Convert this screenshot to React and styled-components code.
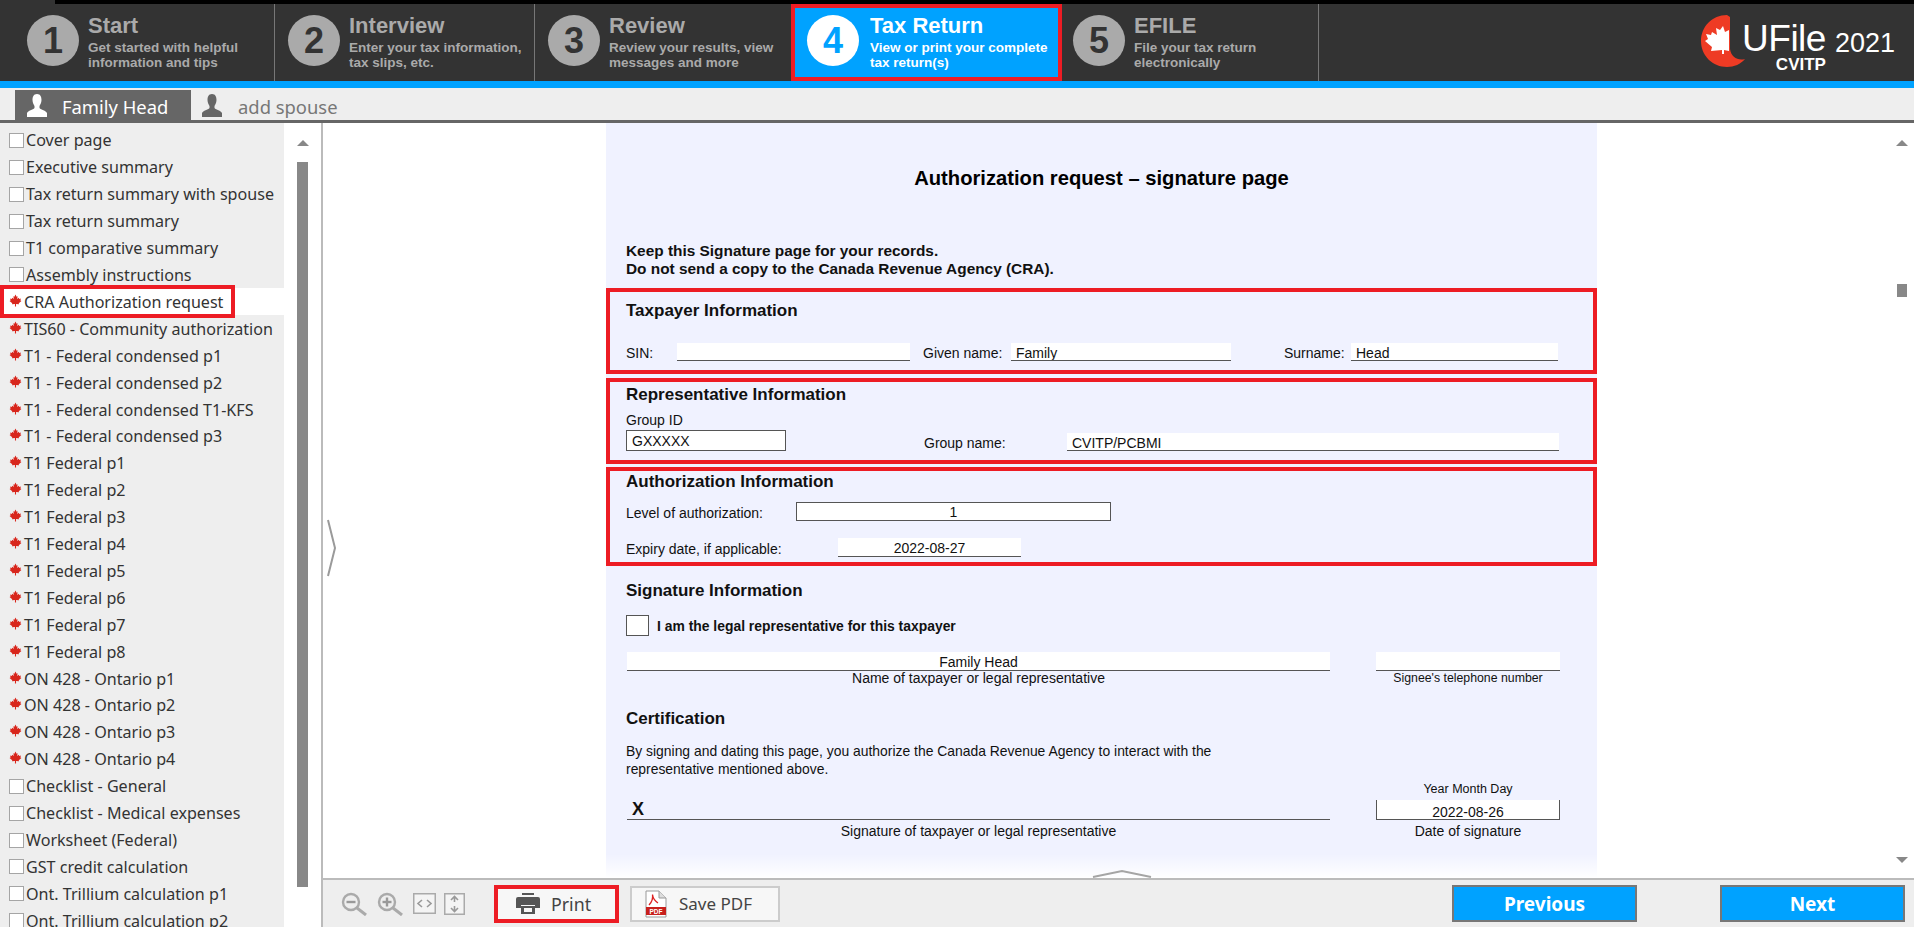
import styled, { createGlobalStyle } from "styled-components";

const GlobalStyle = createGlobalStyle`
  html, body { margin: 0; padding: 0; background: #fff; }
  * { box-sizing: border-box; }
`;

const LEAF =
  "M12 1 L14 5 L16 4 L15 9 L18 7 L19 9 L22 8.5 L21 12 L23 13 L18 17 L18.5 19 L13 18.3 L13 23 L11 23 L11 18.3 L5.5 19 L6 17 L1 13 L3 12 L2 8.5 L5 9 L6 7 L9 9 L8 4 L10 5 Z";

const steps = [
  { n: 1, title: "Start", text: ["Get started with helpful", "information and tips"], w: 275 },
  { n: 2, title: "Interview", text: ["Enter your tax information,", "tax slips, etc."], w: 260 },
  { n: 3, title: "Review", text: ["Review your results, view", "messages and more"], w: 256 },
  { n: 4, title: "Tax Return", text: ["View or print your complete", "tax return(s)"], w: 271, active: true },
  { n: 5, title: "EFILE", text: ["File your tax return", "electronically"], w: 257 },
];

const forms = [
  ["Cover page"],
  ["Executive summary"],
  ["Tax return summary with spouse"],
  ["Tax return summary"],
  ["T1 comparative summary"],
  ["Assembly instructions"],
  ["CRA Authorization request", "leaf", true],
  ["TIS60 - Community authorization", "leaf"],
  ["T1 - Federal condensed p1", "leaf"],
  ["T1 - Federal condensed p2", "leaf"],
  ["T1 - Federal condensed T1-KFS", "leaf"],
  ["T1 - Federal condensed p3", "leaf"],
  ["T1 Federal p1", "leaf"],
  ["T1 Federal p2", "leaf"],
  ["T1 Federal p3", "leaf"],
  ["T1 Federal p4", "leaf"],
  ["T1 Federal p5", "leaf"],
  ["T1 Federal p6", "leaf"],
  ["T1 Federal p7", "leaf"],
  ["T1 Federal p8", "leaf"],
  ["ON 428 - Ontario p1", "leaf"],
  ["ON 428 - Ontario p2", "leaf"],
  ["ON 428 - Ontario p3", "leaf"],
  ["ON 428 - Ontario p4", "leaf"],
  ["Checklist - General"],
  ["Checklist - Medical expenses"],
  ["Worksheet (Federal)"],
  ["GST credit calculation"],
  ["Ont. Trillium calculation p1"],
  ["Ont. Trillium calculation p2"],
];

const Person = ({ color, size = 24 }) => (
  <svg width={size} height={size} viewBox="0 0 24 24">
    <path
      fill={color}
      d="M12 1 C8.5 1 7.5 4 7.5 7 C7.5 10 9 12 9.5 13 L9.5 15 C8 17 3 17.5 2 20 L2 24 L22 24 L22 20 C21 17.5 16 17 14.5 15 L14.5 13 C15 12 16.5 10 16.5 7 C16.5 4 15.5 1 12 1 Z"
    />
  </svg>
);

const Leaf = ({ size = 13, color = "#d8261c" }) => (
  <svg width={size} height={size} viewBox="0 0 24 24">
    <path fill={color} d={LEAF} />
  </svg>
);

const Magnifier = ({ plus }) => (
  <svg width="28" height="24" viewBox="0 0 28 24" fill="none" stroke="#aaa">
    <circle cx="10" cy="10" r="8" strokeWidth="2.4" />
    <path d="M16 16 L25 23" strokeWidth="3" />
    <path d="M5.5 10 H14.5" strokeWidth="2.4" stroke="#999" />
    {plus && <path d="M10 5.5 V14.5" strokeWidth="2.4" stroke="#999" />}
  </svg>
);

const FitWidth = () => (
  <svg width="23" height="21" viewBox="0 0 23 21" fill="none">
    <rect x="0.75" y="0.75" width="21.5" height="19.5" fill="#f4f4f4" stroke="#aaa" strokeWidth="1.5" />
    <path d="M9 7 L5 10.5 L9 14 M14 7 L18 10.5 L14 14" stroke="#999" strokeWidth="1.6" />
  </svg>
);

const FitHeight = () => (
  <svg width="21" height="22" viewBox="0 0 21 22" fill="none">
    <rect x="0.75" y="0.75" width="19.5" height="20.5" fill="#f4f4f4" stroke="#aaa" strokeWidth="1.5" />
    <path d="M7 7 L10.5 3.5 L14 7 M10.5 4 V9 M7 15 L10.5 18.5 L14 15 M10.5 18 V13" stroke="#999" strokeWidth="1.6" />
  </svg>
);

const PrinterIcon = () => (
  <svg width="24" height="21" viewBox="0 0 24 21">
    <path fill="#555" d="M6 0 H18 V2 H6 Z M2 4 H22 Q24 4 24 6 V15 H19 V12 H5 V15 H0 V6 Q0 4 2 4 Z" />
    <path fill="#555" d="M5 13 H19 V21 H5 Z M8 15 V19 H16 V15 Z" fillRule="evenodd" />
  </svg>
);

const PdfIcon = () => (
  <svg width="22" height="28" viewBox="0 0 22 28">
    <path fill="#fff" stroke="#999" d="M1 1 H14 L21 8 V27 H1 Z" />
    <path fill="#ddd" stroke="#999" d="M14 1 V8 H21" />
    <path fill="none" stroke="#d22" strokeWidth="1.3" d="M4 15 C7 12 8 8 7.5 4.5 C8 9 10 11 13 13" />
    <rect x="1" y="17" width="20" height="8" fill="#c8201c" />
    <text x="11" y="23.5" textAnchor="middle" fontSize="6.5" fontWeight="700" fill="#fff" fontFamily="Liberation Sans, sans-serif">
      PDF
    </text>
  </svg>
);

const App = () => {
  return (
    <>
      <GlobalStyle />
      <Screen>
        <TopStrip />
        <Header>
          {steps.map((s) => (
            <Step key={s.n} $w={s.w} $active={s.active}>
              <StepNumber $active={s.active}>{s.n}</StepNumber>
              <StepText>
                <StepTitle $active={s.active}>{s.title}</StepTitle>
                {s.text.map((line) => (
                  <StepLine key={line} $active={s.active}>
                    {line}
                  </StepLine>
                ))}
              </StepText>
            </Step>
          ))}
          <Logo>
            <LogoMark viewBox="0 0 46 52" width="46" height="52">
              <path fill="#ee3b24" d="M26 0 C11 0 0 12 0 26 C0 41 12 52 26 52 C33 52 40 49 44 44 C37 46 30 42 29 34 L29 2 Z" />
              <path fill="#fff" d="M22 11 L24 17 L28 15 L28 36 L23 35 L23 39 L21 39 L21 35 L10 36 L11 32 L4 26 L7 24 L5 19 L10 20 L11 17 L16 20 L15 13 L19 15 Z" />
            </LogoMark>
            <LogoWords>
              <LogoBrand>UFile</LogoBrand>
              <LogoSub>CVITP</LogoSub>
            </LogoWords>
            <LogoYear>2021</LogoYear>
          </Logo>
        </Header>
        <BlueStrip />
        <TabBar>
          <Tab $active>
            <Person color="#fff" />
            Family Head
          </Tab>
          <Tab>
            <Person color="#666" />
            add spouse
          </Tab>
        </TabBar>

        <Body>
          <Sidebar>
            <FormList>
              {forms.map(([name, icon, selected]) => (
                <FormRow key={name} $selected={selected}>
                  {icon ? (
                    <LeafBox>
                      <Leaf />
                    </LeafBox>
                  ) : (
                    <CheckBox />
                  )}
                  {name}
                </FormRow>
              ))}
            </FormList>
            <ListScroll>
              <ArrowUp />
              <ScrollThumb />
            </ListScroll>
          </Sidebar>

          <Main>
            <Viewer>
              <LeftGutter>
                <svg width="12" height="58" viewBox="0 0 12 58" fill="none">
                  <path d="M2 1 L9 29 L2 57" stroke="#9a9a9a" strokeWidth="2" />
                </svg>
              </LeftGutter>

              <Page>
                <PageTitle>Authorization request – signature page</PageTitle>
                <Intro>
                  Keep this Signature page for your records.
                  <br />
                  Do not send a copy to the Canada Revenue Agency (CRA).
                </Intro>

                <Section $h={86} $mt={10}>
                  <SectionHead $mt={5}>Taxpayer Information</SectionHead>
                  <FieldRow $mt={22}>
                    <Label $w={51}>SIN:</Label>
                    <Field $w={233} />
                    <Label $w={88} $ml={13}>Given name:</Label>
                    <Field $w={220}>Family</Field>
                    <Label $w={67} $ml={53}>Surname:</Label>
                    <Field $w={207}>Head</Field>
                  </FieldRow>
                </Section>

                <Section $h={86} $mt={4}>
                  <SectionHead $mt={-1}>Representative Information</SectionHead>
                  <Label $mt={8}>Group ID</Label>
                  <FieldRow $mt={2}>
                    <BoxField $w={160} $h={21}>GXXXXX</BoxField>
                    <Label $w={143} $ml={138}>Group name:</Label>
                    <Field $w={492}>CVITP/PCBMI</Field>
                  </FieldRow>
                </Section>

                <Section $h={99} $mt={3}>
                  <SectionHead $mt={-3}>Authorization Information</SectionHead>
                  <FieldRow $mt={10}>
                    <Label $w={170}>Level of authorization:</Label>
                    <BoxField $w={315} $h={19} $center>1</BoxField>
                  </FieldRow>
                  <FieldRow $mt={17}>
                    <Label $w={212}>Expiry date, if applicable:</Label>
                    <Field $w={183} $h={19} $center>2022-08-27</Field>
                  </FieldRow>
                </Section>

                <Lower>
                  <SectionHead $mt={15}>Signature Information</SectionHead>
                  <CheckRow>
                    <BigCheck />
                    I am the legal representative for this taxpayer
                  </CheckRow>
                  <SignGrid $mt={16}>
                    <div>
                      <Field $h={19} $center>Family Head</Field>
                      <Caption>Name of taxpayer or legal representative</Caption>
                    </div>
                    <div>
                      <Field $h={19} />
                      <Caption $small>Signee's telephone number</Caption>
                    </div>
                  </SignGrid>
                  <SectionHead $mt={23}>Certification</SectionHead>
                  <Paragraph>
                    By signing and dating this page, you authorize the Canada Revenue Agency to interact with the
                    <br />
                    representative mentioned above.
                  </Paragraph>
                  <SignGrid $mt={4} $end>
                    <div>
                      <SignLine>X</SignLine>
                      <Caption>Signature of taxpayer or legal representative</Caption>
                    </div>
                    <div>
                      <YearLabel>Year Month Day</YearLabel>
                      <DateBox>2022-08-26</DateBox>
                      <Caption>Date of signature</Caption>
                    </div>
                  </SignGrid>
                </Lower>

                <PageFade>
                  <svg width="60" height="10" viewBox="0 0 60 10" fill="none">
                    <path d="M1 9 L30 3 L59 9" stroke="#a5a5a5" strokeWidth="2" />
                  </svg>
                </PageFade>
              </Page>

              <RightGutter>
                <ArrowUp />
                <ViewerThumb />
                <ArrowDown />
              </RightGutter>
            </Viewer>

            <BottomBar>
              <ZoomTools>
                <Magnifier />
                <Magnifier plus />
                <FitWidth />
                <FitHeight />
              </ZoomTools>
              <PrintButton>
                <PrinterIcon />
                Print
              </PrintButton>
              <SaveButton>
                <PdfIcon />
                Save PDF
              </SaveButton>
              <NavButton $ml={672}>Previous</NavButton>
              <NavButton $ml={83}>Next</NavButton>
            </BottomBar>
          </Main>
        </Body>
      </Screen>
    </>
  );
};

export default App;

const Screen = styled.div`
  width: 1914px;
  height: 927px;
  overflow: hidden;
  display: flex;
  flex-direction: column;
  background: #eee;
`;

const TopStrip = styled.div`
  height: 4px;
  flex: none;
  background: linear-gradient(to right, #333 55px, #000 55px);
`;

const Header = styled.header`
  height: 77px;
  flex: none;
  display: flex;
  background: #333;
`;

const Step = styled.div`
  width: ${({ $w }) => $w}px;
  flex: none;
  display: flex;
  padding-top: 11px;
  padding-left: ${({ $active }) => ($active ? "16px" : "27px")};
  gap: ${({ $active }) => ($active ? "11px" : "9px")};
  background: ${({ $active }) => ($active ? "#00a2ff" : "transparent")};
  border-right: ${({ $active }) => ($active ? "none" : "1px solid #777")};
  outline: ${({ $active }) => ($active ? "4px solid #ed1c24" : "none")};
  outline-offset: -4px;

  &:nth-child(3) {
    border-right: none;
  }
  &:nth-child(5) {
    padding-left: 11px;
  }
  &:nth-child(2) {
    padding-left: 13px;
  }
  &:nth-child(3) {
    padding-left: 13px;
  }
`;

const StepNumber = styled.div`
  width: 52px;
  height: 51px;
  flex: none;
  border-radius: 50%;
  display: flex;
  align-items: center;
  justify-content: center;
  background: ${({ $active }) => ($active ? "#fff" : "#aaa")};
  color: ${({ $active }) => ($active ? "#00a2ff" : "#333")};
  font: 700 36px "Liberation Sans", Arial, sans-serif;
`;

const StepText = styled.div`
  font-family: "Liberation Sans", Arial, sans-serif;
`;

const StepTitle = styled.div`
  font-size: 22px;
  font-weight: 700;
  line-height: 21px;
  height: 25px;
  color: ${({ $active }) => ($active ? "#fff" : "#aaa")};
`;

const StepLine = styled.div`
  font-size: 13.5px;
  font-weight: 700;
  line-height: 15px;
  white-space: nowrap;
  color: ${({ $active }) => ($active ? "#fff" : "#aaa")};
`;

const Logo = styled.div`
  flex: 1;
  display: flex;
  justify-content: flex-end;
  align-items: flex-start;
  padding: 11px 19px 0 0;
  color: #fff;
  font-family: "Liberation Sans", Arial, sans-serif;
`;

const LogoMark = styled.svg`
  flex: none;
  margin-right: -5px;
`;

const LogoWords = styled.div`
  display: flex;
  flex-direction: column;
  align-items: flex-end;
`;

const LogoBrand = styled.div`
  font-size: 37px;
  line-height: 38px;
  letter-spacing: -0.5px;
  margin-top: 5px;
`;

const LogoSub = styled.div`
  font-size: 17px;
  font-weight: 700;
  line-height: 16px;
  margin-top: -1px;
`;

const LogoYear = styled.div`
  font-size: 27px;
  line-height: 30px;
  margin: 13px 0 0 9px;
`;

const BlueStrip = styled.div`
  height: 7px;
  flex: none;
  background: #00a2ff;
`;

const TabBar = styled.div`
  height: 35px;
  flex: none;
  display: flex;
  align-items: flex-end;
  padding-left: 15px;
  background: #eee;
  border-bottom: 3px solid #666;
`;

const Tab = styled.div`
  height: 30px;
  width: ${({ $active }) => ($active ? "176px" : "auto")};
  display: flex;
  align-items: center;
  gap: ${({ $active }) => ($active ? "13px" : "14px")};
  padding-left: ${({ $active }) => ($active ? "10px" : "9px")};
  padding-top: 3px;
  background: ${({ $active }) => ($active ? "#666" : "transparent")};
  color: ${({ $active }) => ($active ? "#fff" : "#777")};
  font: 400 18.4px "Noto Sans", sans-serif;

  svg {
    margin-top: -3px;
  }
`;

const Body = styled.div`
  flex: 1;
  min-height: 0;
  display: flex;
`;

const Sidebar = styled.aside`
  width: 323px;
  flex: none;
  display: flex;
  background: #fff;
  border-right: 2px solid #bbb;
`;

const FormList = styled.div`
  width: 284px;
  flex: none;
  padding-top: 4px;
  background: #eee;
`;

const FormRow = styled.div`
  position: relative;
  height: 26.92px;
  display: flex;
  align-items: center;
  padding-left: 9px;
  white-space: nowrap;
  color: #333;
  font: 400 16.1px "Noto Sans", sans-serif;
  background: ${({ $selected }) => ($selected ? "#fff" : "transparent")};

  ${({ $selected }) =>
    $selected &&
    `
    &::after {
      content: "";
      box-sizing: border-box;
      position: absolute;
      left: 0;
      top: -3px;
      width: 235px;
      height: 33px;
      border: 4px solid #ed1c24;
    }
  `}
`;

const CheckBox = styled.span`
  width: 15px;
  height: 15px;
  flex: none;
  margin-right: 2px;
  background: #fff;
  border: 1.5px solid #a5a5a5;
`;

const LeafBox = styled.span`
  width: 15px;
  height: 13px;
  flex: none;
  display: flex;
  margin-bottom: 3px;
`;

const ListScroll = styled.div`
  flex: 1;
  display: flex;
  flex-direction: column;
  padding: 17px 0 0 13px;
`;

const ArrowUp = styled.div`
  width: 0;
  height: 0;
  border-left: 6px solid transparent;
  border-right: 6px solid transparent;
  border-bottom: 6px solid #888;
`;

const ArrowDown = styled(ArrowUp)`
  border-bottom: none;
  border-top: 6px solid #888;
`;

const ScrollThumb = styled.div`
  width: 11px;
  height: 725px;
  margin-top: 16px;
  background: #888;
`;

const Main = styled.main`
  flex: 1;
  min-width: 0;
  display: flex;
  flex-direction: column;
`;

const Viewer = styled.div`
  height: 755px;
  flex: none;
  display: flex;
  background: #fff;
`;

const LeftGutter = styled.div`
  width: 283px;
  flex: none;
  padding: 396px 0 0 3px;
`;

const Page = styled.div`
  position: relative;
  width: 991px;
  flex: none;
  overflow: hidden;
  padding-top: 43px;
  background: #f0f2ff;
  color: #111;
  font-family: "Liberation Sans", Arial, sans-serif;
`;

const PageTitle = styled.h1`
  margin: 0;
  height: 24px;
  text-align: center;
  font-size: 20.2px;
  line-height: 24px;
  font-weight: 700;
  color: #000;
`;

const Intro = styled.div`
  margin: 52px 0 0 20px;
  font-size: 15.4px;
  font-weight: 700;
  line-height: 18px;
`;

const Section = styled.section`
  height: ${({ $h }) => $h}px;
  margin-top: ${({ $mt }) => $mt}px;
  padding: 4px 0 0 16px;
  border: 4px solid #ed1c24;
`;

const SectionHead = styled.h2`
  margin: ${({ $mt }) => $mt || 0}px 0 0;
  height: 20px;
  font-size: 17px;
  line-height: 20px;
  font-weight: 700;
  color: #111;
`;

const FieldRow = styled.div`
  display: flex;
  align-items: flex-end;
  margin-top: ${({ $mt }) => $mt || 0}px;
`;

const Label = styled.div`
  width: ${({ $w }) => ($w ? `${$w}px` : "auto")};
  flex: none;
  margin-left: ${({ $ml }) => $ml || 0}px;
  margin-top: ${({ $mt }) => $mt || 0}px;
  font-size: 14px;
  line-height: 15px;
  white-space: nowrap;
`;

const Field = styled.div`
  width: ${({ $w }) => ($w ? `${$w}px` : "100%")};
  height: ${({ $h }) => $h || 18}px;
  flex: none;
  padding-left: ${({ $center }) => ($center ? "0" : "5px")};
  background: #fff;
  border-bottom: 1px solid #555;
  font-size: 14px;
  line-height: 21px;
  overflow: hidden;
  text-align: ${({ $center }) => ($center ? "center" : "left")};
`;

const BoxField = styled.div`
  width: ${({ $w }) => $w}px;
  height: ${({ $h }) => $h}px;
  flex: none;
  padding-left: ${({ $center }) => ($center ? "0" : "5px")};
  background: #fff;
  border: 1px solid #555;
  font-size: 14px;
  line-height: ${({ $h }) => $h}px;
  text-align: ${({ $center }) => ($center ? "center" : "left")};
`;

const Lower = styled.div`
  padding-left: 20px;
  padding-right: 37px;
`;

const CheckRow = styled.div`
  display: flex;
  align-items: center;
  gap: 8px;
  margin-top: 14px;
  font-size: 13.9px;
  font-weight: 700;
`;

const BigCheck = styled.span`
  width: 23px;
  height: 21px;
  background: #fff;
  border: 1px solid #555;
`;

const SignGrid = styled.div`
  display: grid;
  grid-template-columns: 703px 184px;
  column-gap: 46px;
  align-items: ${({ $end }) => ($end ? "end" : "start")};
  margin-top: ${({ $mt }) => $mt}px;
  margin-left: 1px;
`;

const Caption = styled.div`
  text-align: center;
  font-size: ${({ $small }) => ($small ? "12.3px" : "14px")};
  line-height: 15px;
  margin-top: 0;
`;

const Paragraph = styled.p`
  margin: 13px 0 0;
  font-size: 13.9px;
  line-height: 18px;
`;

const SignLine = styled.div`
  height: 21px;
  padding-left: 5px;
  border-bottom: 1px solid #555;
  font-size: 18px;
  font-weight: 700;
  line-height: 21px;
  margin-bottom: 4px;
`;

const YearLabel = styled.div`
  text-align: center;
  font-size: 12.5px;
  line-height: 15px;
  margin-bottom: 3px;
`;

const DateBox = styled.div`
  height: 20px;
  text-align: center;
  background: #fff;
  border: 1px solid #555;
  border-top-width: 0;
  font-size: 14px;
  line-height: 24px;
  margin-bottom: 4px;
`;

const PageFade = styled.div`
  position: absolute;
  left: 0;
  right: 0;
  bottom: 0;
  height: 24px;
  display: flex;
  justify-content: center;
  align-items: flex-end;
  padding: 0 0 0 40px;
  background: linear-gradient(to bottom, rgba(255, 255, 255, 0), #fff);
`;

const RightGutter = styled.div`
  flex: 1;
  display: flex;
  flex-direction: column;
  align-items: flex-end;
  padding: 17px 6px 15px 0;
`;

const ViewerThumb = styled.div`
  width: 10px;
  height: 13px;
  margin: 138px 1px auto 0;
  background: #888;
`;

const BottomBar = styled.div`
  flex: 1;
  display: flex;
  align-items: center;
  padding: 0 0 0 18px;
  background: #eee;
  border-top: 2px solid #bbb;
`;

const ZoomTools = styled.div`
  display: flex;
  align-items: center;
  width: 153px;
  gap: 8px;
`;

const PrintButton = styled.button`
  width: 125px;
  height: 38px;
  display: flex;
  align-items: center;
  gap: 11px;
  padding: 0 0 0 18px;
  background: #f7f7f7;
  border: 4px solid #ed1c24;
  color: #444;
  font: 400 17.8px "Noto Sans", sans-serif;
`;

const SaveButton = styled.button`
  width: 150px;
  height: 36px;
  display: flex;
  align-items: center;
  gap: 12px;
  margin-left: 11px;
  padding: 0 0 0 13px;
  background: #f7f7f7;
  border: 2px solid #ccc;
  color: #444;
  font: 400 17px "Noto Sans", sans-serif;
`;

const NavButton = styled.button`
  width: 185px;
  height: 37px;
  margin-left: ${({ $ml }) => $ml}px;
  background: #00a2ff;
  border: 2px solid #777;
  color: #fff;
  font: 700 19px "Noto Sans", sans-serif;
`;
